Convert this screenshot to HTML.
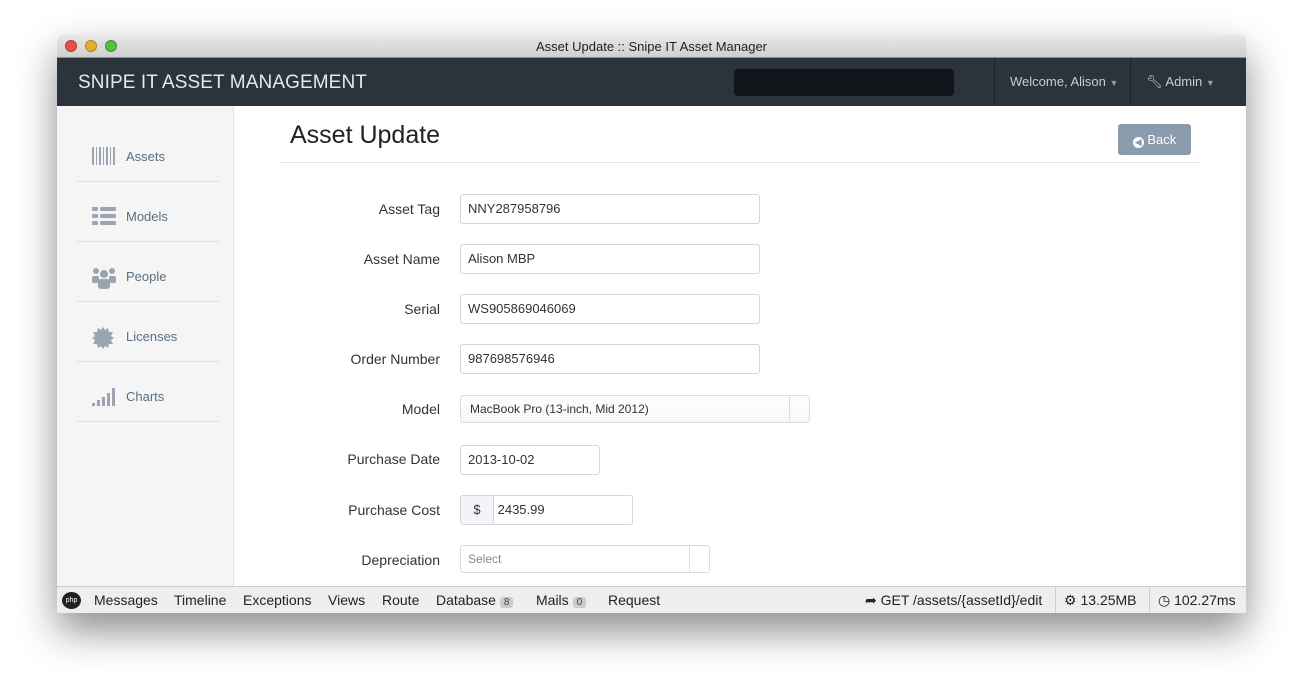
<!DOCTYPE html>
<html><head><meta charset="utf-8"><style>
*{box-sizing:border-box;margin:0;padding:0}
body{width:1303px;height:693px;background:#fff;font-family:"Liberation Sans",sans-serif;position:relative;overflow:hidden}
.win{position:absolute;left:57px;top:35px;width:1189px;height:578px;background:#fff;box-shadow:0 18px 40px rgba(0,0,0,.45);border-radius:5px 5px 0 0;overflow:hidden}
.title{position:absolute;left:0;top:0;width:100%;height:23px;background:linear-gradient(#e8e8e8,#cfcfcf);border-bottom:1px solid #8f8f8f;text-align:center;font-size:13px;line-height:23px;color:#222}
.dot{position:absolute;top:5px;width:12px;height:12px;border-radius:50%;border:1px solid rgba(0,0,0,.25)}
.nav{position:absolute;left:0;top:23px;width:100%;height:48px;background:#2b333d;color:#fff}
.brand{position:absolute;left:21px;top:14px;font-size:19px;color:#e6e8ea;letter-spacing:.1px}
.srch{position:absolute;left:677px;top:11px;width:220px;height:27px;background:#111418;border-radius:4px}
.nitem{position:absolute;top:0;height:48px;border-left:1px solid #1d2228;color:#ccc;font-size:13px;line-height:48px;padding-left:15px}
.side{position:absolute;left:0;top:71px;width:177px;height:480px;background:#f5f5f5;border-right:1px solid #e3e3e3}
.si{position:absolute;left:20px;width:142px;height:60px;border-bottom:1px solid #dde1e5;font-size:13px;color:#5a6e80}
.si span{position:absolute;left:49px;top:27px}
.si svg{position:absolute;left:15px;top:25px}
.h1{position:absolute;left:233px;top:86px;font-size:25px;color:#222}
.hr{position:absolute;left:223px;top:127px;width:920px;border-top:1px solid #e6e6e6}
.back{position:absolute;left:1061px;top:89px;width:73px;height:31px;background:#8a9bac;border-radius:3px;color:#fff;font-size:13px;line-height:31px;text-align:center}
.lbl{position:absolute;right:806px;font-size:14px;color:#333;text-align:right}
.inp{position:absolute;left:403px;height:30px;border:1px solid #d3d8de;border-radius:3px;font-size:13px;color:#333;line-height:28px;padding-left:7px}
.foot{position:absolute;left:0;top:551px;width:100%;height:27px;background:#eee;border-top:1px solid #ccc;font-size:14px;color:#222;line-height:26px;font-family:"Liberation Sans Narrow","Liberation Sans",sans-serif}
.foot span{position:absolute}
.badge{background:#ccc;border-radius:3px;font-size:10px;padding:0 4px;color:#444}
</style></head><body>
<div class="win">
<div class="title">Asset Update :: Snipe IT Asset Manager
<div class="dot" style="left:8px;background:#e8504a"></div><div class="dot" style="left:28px;background:#e6ae2f"></div><div class="dot" style="left:48px;background:#5bbf3e"></div></div>
<div class="nav"><div class="brand">SNIPE IT ASSET MANAGEMENT</div><div class="srch"></div>
<div class="nitem" style="left:937px;width:136px">Welcome, Alison <span style="font-size:9px;color:#999">▼</span></div>
<div class="nitem" style="left:1073px;width:116px">🔧︎ Admin <span style="font-size:9px;color:#999">▼</span></div></div>
<div class="side">
<div class="si" style="top:16px"><svg width="24" height="18"><g fill="#9aa5b1"><rect x="0" y="0" width="2" height="18"/><rect x="4" y="0" width="1" height="18"/><rect x="7" y="0" width="2" height="18"/><rect x="11" y="0" width="1" height="18"/><rect x="14" y="0" width="2" height="18"/><rect x="18" y="0" width="1" height="18"/><rect x="21" y="0" width="2" height="18"/></g></svg><span>Assets</span></div>
<div class="si" style="top:76px"><svg width="24" height="18"><g fill="#9aa5b1"><rect x="0" y="0" width="6" height="4" rx="1"/><rect x="8" y="0" width="16" height="4" rx="1"/><rect x="0" y="7" width="6" height="4" rx="1"/><rect x="8" y="7" width="16" height="4" rx="1"/><rect x="0" y="14" width="6" height="4" rx="1"/><rect x="8" y="14" width="16" height="4" rx="1"/></g></svg><span>Models</span></div>
<div class="si" style="top:136px"><svg width="24" height="22"><g fill="#9aa5b1"><circle cx="4" cy="4" r="3"/><circle cx="20" cy="4" r="3"/><circle cx="12" cy="7" r="4"/><rect x="0" y="9" width="7" height="7" rx="2"/><rect x="17" y="9" width="7" height="7" rx="2"/><rect x="6" y="12" width="12" height="10" rx="3"/></g></svg><span>People</span></div>
<div class="si" style="top:196px"><svg width="22" height="22"><polygon fill="#9aa5b1" points="11,0 13,3 16,1 17,5 21,5 19,9 22,11 19,13 21,17 17,17 16,21 13,19 11,22 9,19 6,21 5,17 1,17 3,13 0,11 3,9 1,5 5,5 6,1 9,3"/></svg><span>Licenses</span></div>
<div class="si" style="top:256px"><svg width="24" height="20"><g fill="#9aa5b1"><rect x="0" y="16" width="3" height="3"/><rect x="5" y="13" width="3" height="6"/><rect x="10" y="10" width="3" height="9"/><rect x="15" y="6" width="3" height="13"/><rect x="20" y="1" width="3" height="18"/></g></svg><span>Charts</span></div>
</div>
<div class="h1">Asset Update</div><div class="hr"></div>
<div class="back"><span style="display:inline-block;width:11px;height:11px;border-radius:50%;background:#fff;color:#8a9bac;font-size:9px;line-height:11px;vertical-align:-1px">◀</span> Back</div>
<div class="lbl" style="top:166px">Asset Tag</div><div class="inp" style="top:159px;width:300px">NNY287958796</div>
<div class="lbl" style="top:216px">Asset Name</div><div class="inp" style="top:209px;width:300px">Alison MBP</div>
<div class="lbl" style="top:266px">Serial</div><div class="inp" style="top:259px;width:300px">WS905869046069</div>
<div class="lbl" style="top:316px">Order Number</div><div class="inp" style="top:309px;width:300px">987698576946</div>
<div class="lbl" style="top:366px">Model</div><div class="inp" style="top:360px;height:28px;width:350px;line-height:26px;padding-left:9px;font-size:12px;background:linear-gradient(#fff,#f6f6f6);border-color:#d5dde5">MacBook Pro (13-inch, Mid 2012)<div style="position:absolute;right:19px;top:0;height:26px;border-left:1px solid #d5dde5"></div></div>
<div class="lbl" style="top:416px">Purchase Date</div><div class="inp" style="top:410px;width:140px">2013-10-02</div>
<div class="lbl" style="top:467px">Purchase Cost</div><div class="inp" style="top:460px;width:173px;padding-left:0"><span style="display:inline-block;width:33px;height:28px;background:#f2f4f7;border-right:1px solid #d3d8de;text-align:center">$</span> 2435.99</div>
<div class="lbl" style="top:517px">Depreciation</div><div class="inp" style="top:510px;height:28px;width:250px;line-height:26px;font-size:12px;color:#888;border-color:#d5dde5">Select<div style="position:absolute;right:19px;top:0;height:26px;border-left:1px solid #d5dde5"></div></div>
<div class="foot">
<span style="left:5px;top:5px;width:19px;height:17px;border-radius:50%;background:#222;color:#fff;font-size:7px;line-height:17px;text-align:center">php</span>
<span style="left:37px">Messages</span><span style="left:117px">Timeline</span><span style="left:186px">Exceptions</span><span style="left:271px">Views</span><span style="left:325px">Route</span><span style="left:379px">Database <span class="badge" style="position:static">8</span></span><span style="left:479px">Mails <span class="badge" style="position:static">0</span></span><span style="left:551px">Request</span>
<span style="left:808px">➦ GET /assets/{assetId}/edit</span>
<span style="left:998px;height:26px;border-left:1px solid #ccc;padding-left:8px">⚙ 13.25MB</span>
<span style="left:1092px;height:26px;border-left:1px solid #ccc;padding-left:8px">◷ 102.27ms</span>
</div>
</div>
</body></html>
